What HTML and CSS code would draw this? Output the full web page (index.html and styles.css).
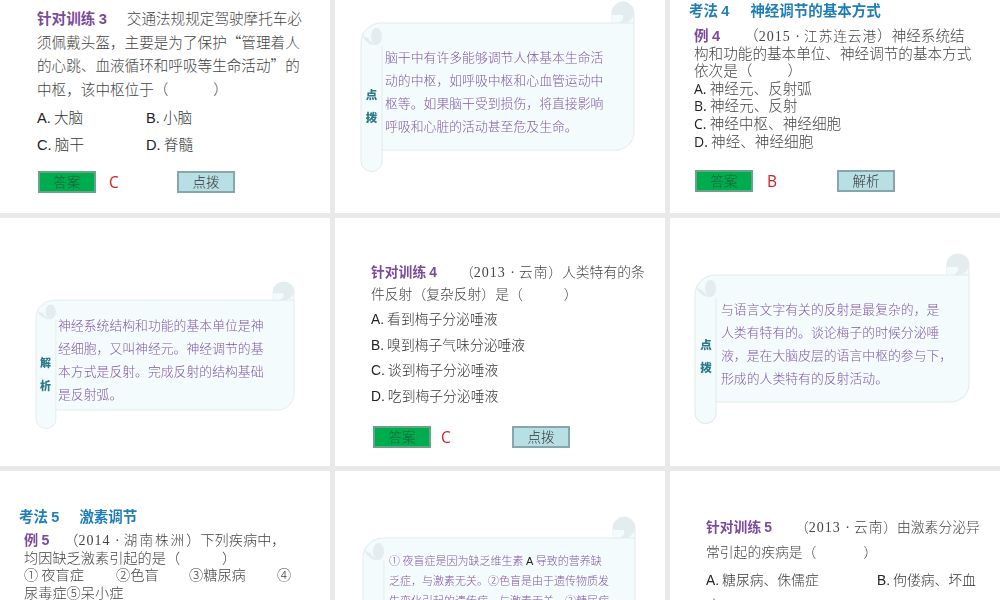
FILE: index.html
```html
<!DOCTYPE html>
<html lang="zh-CN">
<head>
<meta charset="utf-8">
<title>课件</title>
<link rel="stylesheet" href="styles.css">
</head>
<body>
<main class="deck">

<section class="slide s1">
  <p class="q"><b class="tag">针对训练 <span class="num">3</span></b><span class="sp-a"></span>交通法规规定驾驶摩托车必<br>须佩戴头盔，主要是为了保护<span class="cjk">“</span>管理着人<br>的心跳、血液循环和呼吸等生命活动<span class="cjk">”</span>的<br>中枢，该中枢位于（<span class="blank"></span>）</p>
  <div class="opts"><div class="opt-row"><span class="opt-cell"><span class="key">A.</span> 大脑</span><span><span class="key">B.</span> 小脑</span></div>
  <div class="opt-row"><span class="opt-cell"><span class="key">C.</span> 脑干</span><span><span class="key">D.</span> 脊髓</span></div></div>
  <div class="actions"><span class="btn btn-ok">答案</span><span class="ans">C</span><span class="btn btn-alt">点拨</span></div>
</section>

<section class="slide s2">
  <div class="scroll">
    <svg class="art" viewBox="0 0 273 170" preserveAspectRatio="none" aria-hidden="true">
      <defs>
        <g id="scroll-shape">
          <path d="M0 41A20 20 0 0 1 20 21H251V11A11 11 0 0 1 273 11V130A18 18 0 0 1 255 148H21V159A10.5 10.5 0 0 1 0 159Z" fill="#f4fbfc" stroke="#e2eaeb" stroke-width="1"/>
          <path d="M251 21V11A11 11 0 0 1 273 11A11 11 0 0 1 262 21Z" fill="#e3ecee"/>
          <path d="M251 21V13H262V17L258 21Z" fill="#f4fbfc"/>
          <path d="M251 21H273" stroke="#e2eaeb" fill="none"/>
          <path d="M21 44V148" stroke="#e2eaeb" fill="none"/>
          <ellipse cx="15.5" cy="34.5" rx="5.5" ry="8.5" fill="#e3ecee"/>
          <path d="M0 30Q4 43 15 43Q9 40 7.5 36Q3 36 0 30Z" fill="#e3ecee"/>
        </g>
      </defs>
      <use href="#scroll-shape"/>
    </svg>
    <div class="side">点<br>拨</div>
    <p class="note">脑干中有许多能够调节人体基本生命活<br>动的中枢，如呼吸中枢和心血管运动中<br>枢等。如果脑干受到损伤，将直接影响<br>呼吸和心脏的活动甚至危及生命。</p>
  </div>
</section>

<section class="slide s3">
  <h2 class="topic">考法 <span class="num">4</span><span class="sp-b"></span>神经调节的基本方式</h2>
  <p class="ex"><b class="tag">例 <span class="num">4</span></b><span class="sp-c"></span><span class="src">（<span class="year">2015 ·</span> <span class="place">江苏连云港</span>）</span>神经系统结<br>构和功能的基本单位、神经调节的基本方式<br>依次是（<span class="blank-s"></span>）<br><span class="key-c">A.</span> 神经元、反射弧<br><span class="key-c">B.</span> 神经元、反射<br><span class="key-c">C.</span> 神经中枢、神经细胞<br><span class="key-c">D.</span> 神经、神经细胞</p>
  <div class="actions"><span class="btn btn-ok">答案</span><span class="ans ans-wide">B</span><span class="btn btn-alt">解析</span></div>
</section>

<section class="slide s4">
  <div class="scroll">
    <svg class="art" viewBox="0 0 273 170" preserveAspectRatio="none" aria-hidden="true"><use href="#scroll-shape"/></svg>
    <div class="side">解<br>析</div>
    <p class="note">神经系统结构和功能的基本单位是神<br>经细胞，又叫神经元。神经调节的基<br>本方式是反射。完成反射的结构基础<br>是反射弧。</p>
  </div>
</section>

<section class="slide s5">
  <p class="q"><b class="tag">针对训练 <span class="num">4</span></b><span class="sp-d"></span><span class="src">（<span class="year">2013 ·</span> <span class="place">云南</span>）</span>人类特有的条<br>件反射（复杂反射）是（<span class="blank"></span>）</p>
  <div class="opts">
    <div class="opt-row"><span><span class="key">A.</span> 看到梅子分泌唾液</span></div>
    <div class="opt-row"><span><span class="key">B.</span> 嗅到梅子气味分泌唾液</span></div>
    <div class="opt-row"><span><span class="key">C.</span> 谈到梅子分泌唾液</span></div>
    <div class="opt-row"><span><span class="key">D.</span> 吃到梅子分泌唾液</span></div>
  </div>
  <div class="actions"><span class="btn btn-ok">答案</span><span class="ans ans-tight">C</span><span class="btn btn-alt">点拨</span></div>
</section>

<section class="slide s6">
  <div class="scroll">
    <svg class="art" viewBox="0 0 273 170" preserveAspectRatio="none" aria-hidden="true"><use href="#scroll-shape"/></svg>
    <div class="side">点<br>拨</div>
    <p class="note">与语言文字有关的反射是最复杂的，是<br>人类有特有的。谈论梅子的时候分泌唾<br>液，是在大脑皮层的语言中枢的参与下，<br>形成的人类特有的反射活动。</p>
  </div>
</section>

<section class="slide s7">
  <h2 class="topic">考法 <span class="num">5</span><span class="sp-b"></span>激素调节</h2>
  <p class="ex"><b class="tag">例 <span class="num">5</span></b><span class="sp-e"></span><span class="src">（<span class="year">2014 ·</span> <span class="place">湖南株洲</span>）</span>下列疾病中，<br>均因缺乏激素引起的是（<span class="blank-s"></span>）<br><span class="c1">① 夜盲症</span><span class="c2">②色盲</span><span class="c3">③糖尿病</span>④<br>尿毒症⑤呆小症</p>
</section>

<section class="slide s8">
  <div class="scroll">
    <svg class="art" viewBox="0 0 273 170" preserveAspectRatio="none" aria-hidden="true"><use href="#scroll-shape"/></svg>
    <p class="note">① 夜盲症是因为缺乏维生素 <span class="key">A</span> 导致的营养缺<br>乏症，与激素无关。②色盲是由于遗传物质发<br>生变化引起的遗传病，与激素无关。③糖尿病</p>
  </div>
</section>

<section class="slide s9">
  <p class="q"><b class="tag">针对训练 <span class="num">5</span></b><span class="sp-d"></span><span class="src">（<span class="year">2013 ·</span> <span class="place">云南</span>）</span>由激素分泌异<br>常引起的疾病是（<span class="blank"></span>）</p>
  <div class="opts">
    <div class="opt-row"><span class="opt-cell"><span class="key">A.</span> 糖尿病、侏儒症</span><span><span class="key">B.</span> 佝偻病、坏血</span></div>
    <div class="opt-row"><span>症</span></div>
  </div>
</section>

</main>
</body>
</html>
```
FILE: styles.css
```css
* { box-sizing: border-box; margin: 0; padding: 0; }
html, body { width: 1000px; height: 600px; overflow: hidden; background: #e9e9e9; }
body { font-family: "Noto Sans CJK SC", "Liberation Sans", sans-serif; color: #444; font-weight: 300; }

.deck {
  display: grid;
  grid-template-columns: repeat(3, 330px);
  grid-auto-rows: 248px;
  gap: 5px;
  margin-top: -35px;
  filter: blur(0.3px);
}
.slide { background: #fff; overflow: hidden; }

.q, .opts, .ex { font-size: 14.6px; }
.q { line-height: 23.5px; white-space: nowrap; }
.opt-row { display: flex; line-height: 27px; white-space: nowrap; color: #333; }
.key { font-family: "Liberation Sans", sans-serif; font-weight: 400; color: #222; }
.key-c { font-family: "Open Sans", sans-serif; font-weight: 400; color: #222; font-size: 14px; }
.cjk { font-family: "Noto Sans CJK SC", sans-serif; }
.tag { color: #7a4a9c; font-weight: 700; }
.num { font-family: "Liberation Sans", sans-serif; font-weight: 700; }
.num, .key, .key-c, .cjk, .year, .place { line-height: 0; }
.topic { font-size: 14.5px; line-height: 20px; font-weight: 700; color: #1f7db8; white-space: nowrap; }
.ex { line-height: 17.6px; white-space: nowrap; }

.sp-a { display: inline-block; width: 20px; }
.sp-b { display: inline-block; width: 21px; }
.sp-c { display: inline-block; width: 24px; }
.sp-d { display: inline-block; width: 23px; }
.sp-e { display: inline-block; width: 15px; }
.blank { display: inline-block; width: 45px; }
.blank-s { display: inline-block; width: 35px; }
.src { white-space: nowrap; }
.year { font-family: "Liberation Serif", serif; letter-spacing: 1px; font-weight: 400; font-size: 14px; }
.place { font-size: 13.6px; letter-spacing: 1px; }
.c1 { display: inline-block; width: 92px; }
.c2 { display: inline-block; width: 73px; }
.c3 { display: inline-block; width: 88px; }

.actions { display: flex; align-items: center; margin-left: 1px; }
.btn {
  display: block;
  flex: none;
  width: 58px;
  height: 22px;
  border: 2px solid;
  font-size: 13.5px;
  line-height: 17px;
  text-align: center;
}
.btn-ok { background: #00ad4e; border-color: #66a488; color: #1d5c38; }
.btn-alt { background: #b8dfe3; border-color: #87a6ab; color: #333; }
.ans {
  width: 81px;
  padding-left: 13px;
  font-family: "Open Sans", sans-serif;
  font-size: 15.5px;
  font-weight: 400;
  line-height: 22px;
  color: #c9252c;
}
.ans-wide { width: 84px; padding-left: 14px; }
.ans-tight { padding-left: 10px; }

.scroll { position: relative; display: flex; align-items: flex-start; width: 273px; height: 170px; }
.art { position: absolute; left: 0; top: 0; width: 100%; height: 100%; overflow: visible; }
.side {
  position: relative;
  flex: none;
  width: 21px;
  margin-top: 80.5px;
  font-size: 11.5px;
  line-height: 23px;
  font-weight: 900;
  text-align: center;
  color: #2b7a8c;
}
.note {
  position: relative;
  margin: 42.5px 0 0 3px;
  font-size: 12.85px;
  line-height: 23px;
  color: #8258a6;
  white-space: nowrap;
}

.s1 { padding: 41px 0 0 37px; }
.s1 .opts { margin-top: 3px; }
.s1 .opt-cell { width: 109px; }
.s1 .actions { margin-top: 14px; }

.s2 { padding: 37px 0 0 26px; }

.s3 { padding: 35px 0 0 19px; }
.s3 .ex { margin: 6px 0 0 5px; }
.s3 .actions { margin: 21px 0 0 6px; }

.s4 { padding: 64px 0 0 36px; }
.s4 .scroll { width: 258px; height: 147px; }
.s4 .side { width: 19px; margin-top: 68.5px; font-size: 11px; }
.s4 .note { margin-top: 30.5px; }

.s5 { padding: 42px 0 0 36px; }
.s5 .q { font-size: 13.8px; line-height: 22px; }
.s5 .blank { width: 41px; }
.s5 .opts { font-size: 13.8px; margin-top: 2px; }
.s5 .opt-row { line-height: 25.7px; }
.s5 .actions { margin: 17px 0 0 2px; }

.s6 { padding: 36px 0 0 25px; }
.s6 .scroll { width: 274px; }
.s6 .side { width: 22px; margin-top: 79px; }
.s6 .note { margin: 42.5px 0 0 4px; }

.s7 { padding: 35px 0 0 19px; }
.s7 .sp-b { width: 20px; }
.s7 .ex { margin: 5px 0 0 5px; font-size: 14.2px; }
.s7 .place { letter-spacing: 2px; }
.s7 .blank-s { width: 42px; }

.s8 { padding: 46px 0 0 28px; }
.s8 .scroll { width: 272px; }
.s8 .note { margin: 32.5px 0 0 26px; font-size: 11px; line-height: 20px; }

.s9 { padding: 42.5px 0 0 36px; }
.s9 .q { font-size: 13.8px; line-height: 25px; }
.s9 .blank { width: 47px; }
.s9 .opts { font-size: 13.8px; margin-top: 3.5px; }
.s9 .opt-row { line-height: 25px; }
.s9 .opt-cell { width: 171px; }
```
